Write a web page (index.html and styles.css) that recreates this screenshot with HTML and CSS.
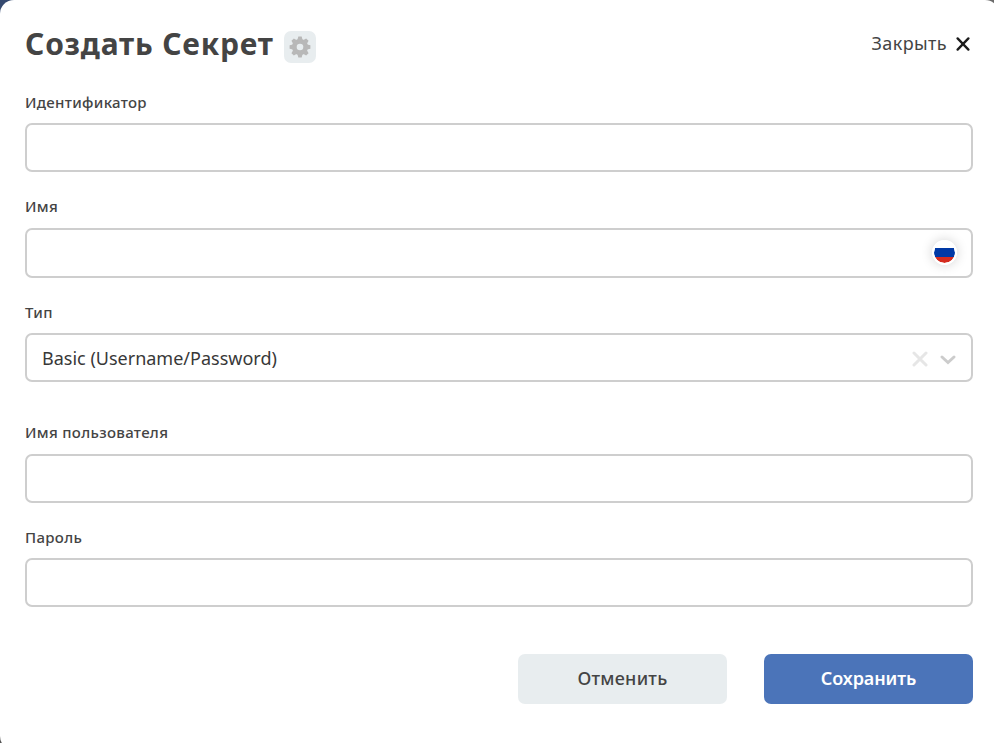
FILE: index.html
```html
<!DOCTYPE html>
<html lang="ru">
<head>
<meta charset="utf-8">
<title>Создать Секрет</title>
<link rel="stylesheet" href="styles.css">
</head>
<body>
<main class="modal">
  <header class="head">
    <h1 class="title">Создать Секрет</h1>
    <button class="gear" type="button" aria-label="Настройки">
      <svg width="22" height="22" viewBox="-11 -11 22 22"><g fill="#b8b8b8"><circle r="8"/><g id="t"><path d="M-2.6-7 -1.7-10.4H1.7L2.6-7V7L1.7 10.4H-1.7L-2.6 7Z"/></g><use href="#t" transform="rotate(45)"/><use href="#t" transform="rotate(90)"/><use href="#t" transform="rotate(135)"/></g><circle r="3.3" fill="#e8edef"/></svg>
    </button>
    <button class="close" type="button"><span>Закрыть</span>
      <svg width="14" height="14" viewBox="0 0 14 14"><path d="M1.6 1.4 12.4 12.6M12.4 1.4 1.6 12.6" stroke="#1c1c1c" stroke-width="2.3" stroke-linecap="round"/></svg>
    </button>
  </header>
  <form class="form">
    <div class="field"><label class="label" for="id">Идентификатор</label><input class="input" id="id"></div>
    <div class="field name"><label class="label" for="name">Имя</label>
      <div class="input"><span class="flag"></span></div>
    </div>
    <div class="field type"><span class="label">Тип</span>
      <div class="input"><span class="value">Basic (Username/Password)</span>
        <svg class="clear" width="16" height="16" viewBox="0 0 16 16"><path d="M2 2 14 14M14 2 2 14" stroke="#e6e6e6" stroke-width="3" stroke-linecap="round"/></svg>
        <svg class="arrow" width="16" height="10" viewBox="0 0 16 10"><path d="M2 2 8 7.6 14 2" fill="none" stroke="#ccc" stroke-width="2.9" stroke-linecap="round"/></svg>
      </div>
    </div>
    <div class="field user"><label class="label" for="user">Имя пользователя</label><input class="input" id="user"></div>
    <div class="field"><label class="label" for="pass">Пароль</label><input class="input" id="pass" type="password"></div>
    <footer class="actions">
      <button class="btn" type="button">Отменить</button>
      <button class="btn primary" type="button">Сохранить</button>
    </footer>
  </form>
</main>
</body>
</html>
```
FILE: styles.css
```css
* { box-sizing: border-box; }
html { height: 100%; overflow: hidden; }
body {
  margin: 0;
  height: 100%;
  overflow: hidden;
  background: linear-gradient(90deg, #354a70 0 50%, #6b6b6b 50%) top / 100% 40px no-repeat #555;
  font-family: "Noto Sans", "Open Sans", sans-serif;
  color: #444;
}
button { border: 0; padding: 0; font: inherit; color: inherit; }
svg { display: block; }
.modal {
  width: 999px;
  height: 750px;
  padding: 0 26px 0 25px;
  border-radius: 14px;
  background: #fff;
}
.head { display: flex; height: 92px; align-items: flex-start; }
.title {
  margin: 23px 0 0;
  font-size: 30px;
  line-height: 41px;
  font-weight: 700;
  letter-spacing: 0.8px;
  white-space: nowrap;
}
.gear {
  display: grid;
  place-items: center;
  width: 32px;
  height: 32px;
  margin: 31px 0 0 10.6px;
  border-radius: 7px;
  background: #e8edef;
}
.gear svg { margin-right: 1px; }
.close {
  display: flex;
  align-items: center;
  gap: 9px;
  margin: 31px 3px 0 auto;
  background: none;
  font-size: 18px;
  line-height: 25px;
  font-weight: 430;
  letter-spacing: 0.38px;
}
.field { display: flex; flex-direction: column; height: 105px; }
.label {
  height: 31px;
  font-size: 15px;
  line-height: 20px;
  font-weight: 480;
  letter-spacing: 0.31px;
}
.input {
  display: flex;
  align-items: center;
  width: 100%;
  height: 49px;
  padding: 0 15px;
  border: 2px solid #cecece;
  border-radius: 7px;
  background: #fff;
  font: 18px "Noto Sans", sans-serif;
}
.name { height: 106px; margin-top: -1px; }
.name .label { height: 32px; }
.name .input { height: 50px; padding-right: 14px; }
.type { height: 120px; }
.user .label { height: 32px; }
.flag {
  width: 25px;
  height: 25px;
  margin-left: auto;
  margin-top: -1px;
  border: 2px solid #fff;
  border-radius: 50%;
  background: linear-gradient(#fff 0 6.5px, #0039a6 6.5px 15px, #d52b1e 15px);
  background-origin: padding-box;
  background-clip: padding-box;
  box-shadow: 0 0 12px rgba(0, 0, 0, .18);
}
.value { color: #383838; font-weight: 450; }
.clear { margin: 2px 0 0 auto; }
.arrow { margin: 4px 0 0 12px; }
.actions { display: flex; justify-content: flex-end; gap: 37px; padding-top: 22px; }
.btn {
  width: 209px;
  height: 50px;
  padding-bottom: 2px;
  border-radius: 7px;
  background: #e8edef;
  font-size: 18px;
  font-weight: 480;
  letter-spacing: 0.25px;
}
.primary { background: #4b74b9; color: #fff; font-weight: 600; letter-spacing: -0.1px; }
```
